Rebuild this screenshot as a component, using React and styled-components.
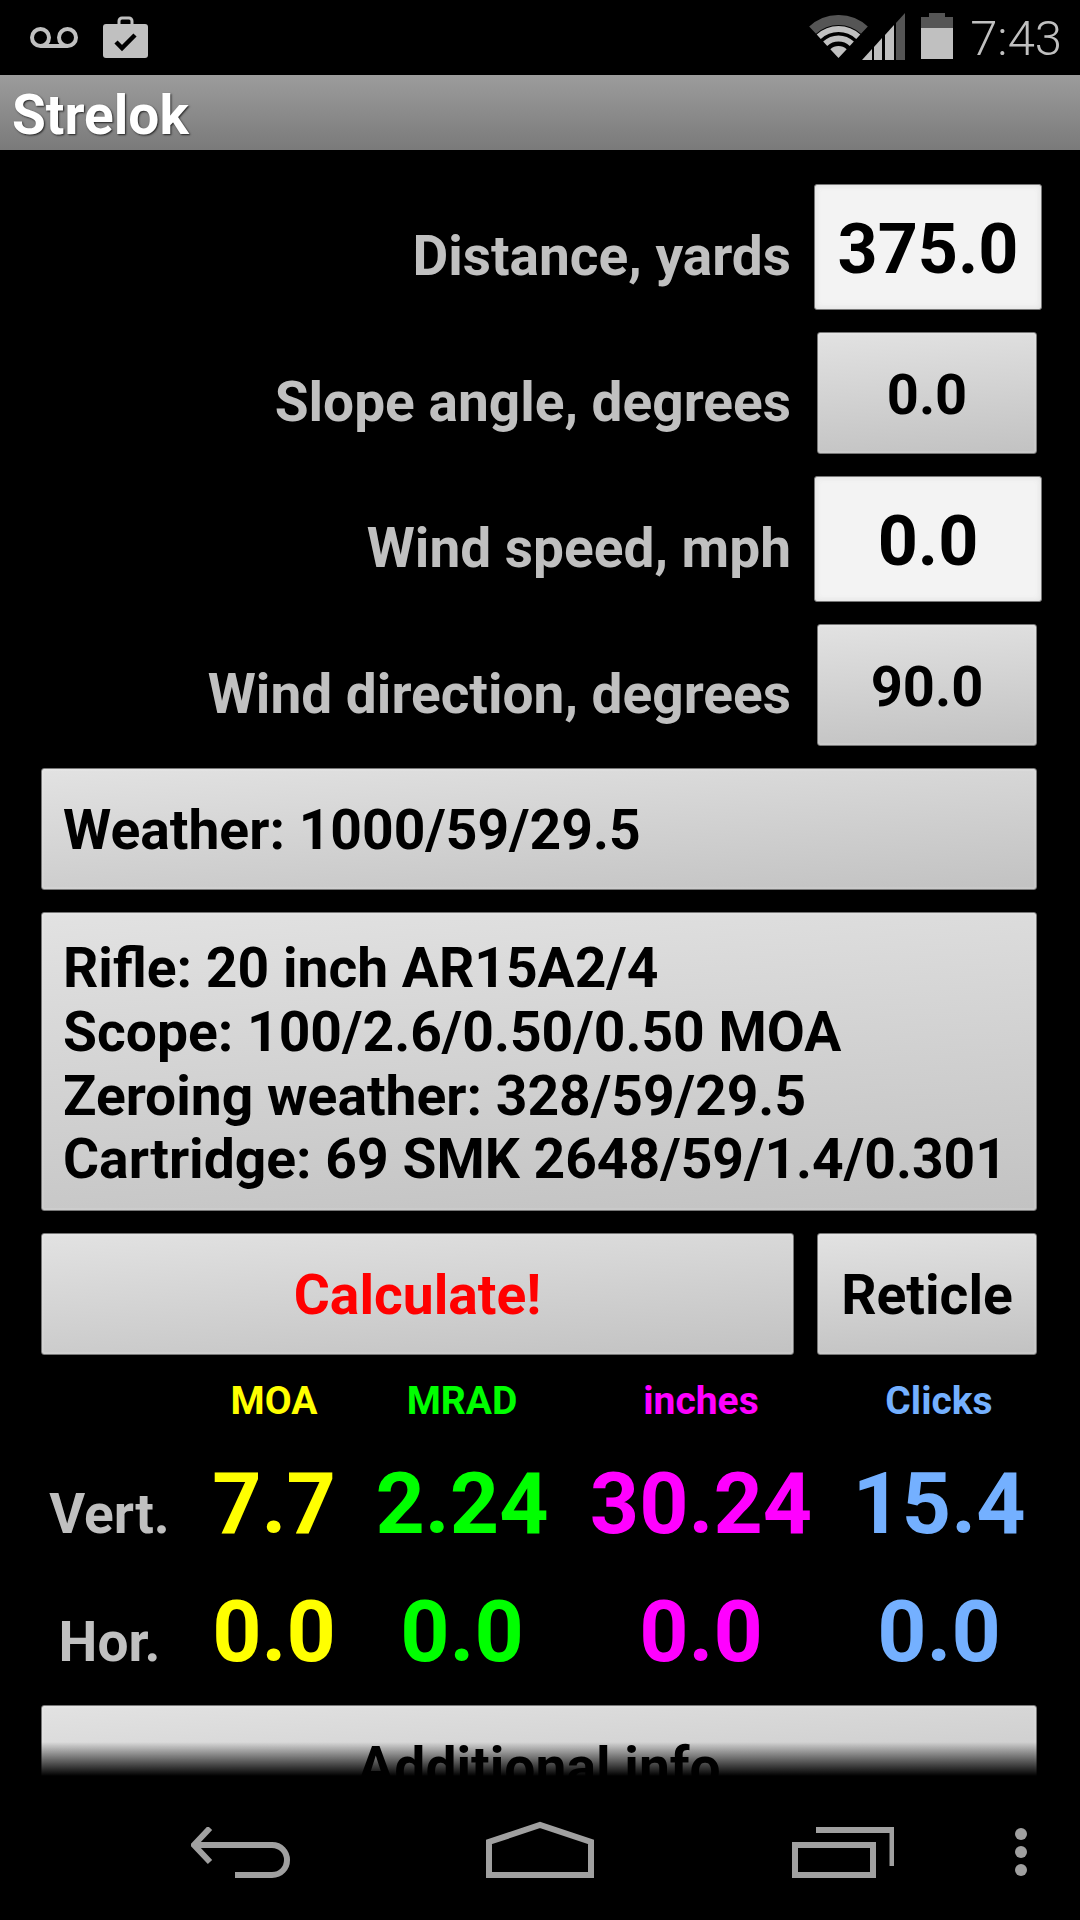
import React from "react";
import styled, { createGlobalStyle } from "styled-components";

const rows = [
  { label: "Distance, yards", value: "375.0", focused: true },
  { label: "Slope angle, degrees", value: "0.0" },
  { label: "Wind speed, mph", value: "0.0", focused: true },
  { label: "Wind direction, degrees", value: "90.0" },
];

const infoLines = [
  "Rifle: 20 inch AR15A2/4",
  "Scope: 100/2.6/0.50/0.50 MOA",
  "Zeroing weather: 328/59/29.5",
  "Cartridge: 69 SMK 2648/59/1.4/0.301",
];

const YELLOW = "#ffff00";
const GREEN = "#00ff00";
const MAGENTA = "#ff00ff";
const BLUE = "#74b0ff";

// wifi fan: stroked arcs around the apex of the icon
const wifiArc = (r) => {
  const a = (43 * Math.PI) / 180;
  const dx = (r * Math.sin(a)).toFixed(2);
  const y = (43 - r * Math.cos(a)).toFixed(2);
  return `M${29.5 - dx} ${y}A${r} ${r} 0 0 1 ${29.5 + Number(dx)} ${y}`;
};

function App() {
  return (
    <>
      <GlobalStyle />
      <Screen>
        <StatusBar>
          <StatusGroup>
            <VoicemailSvg width="48" height="21" viewBox="0 0 48 21" fill="none" stroke="#c0c0c0" strokeWidth="4">
              <circle cx="10.5" cy="10.5" r="8.500" />
              <circle cx="37.5" cy="10.5" r="8.500" />
              <path d="M10.5 19h27" />
            </VoicemailSvg>
            <BriefcaseIcon />
          </StatusGroup>
          <StatusGroup>
            <WifiIcon />
            <SignalIcon />
            <BatteryIcon />
            <Clock>7:43</Clock>
          </StatusGroup>
        </StatusBar>
        <ActionBar>Strelok</ActionBar>

        <Content>
          {rows.map((row) => (
            <InputRow key={row.label}>
              <RowLabel $focused={row.focused}>{row.label}</RowLabel>
              <ValueButton $focused={row.focused}>{row.value}</ValueButton>
            </InputRow>
          ))}

          <WideButton>Weather: 1000/59/29.5</WideButton>
          <InfoButton>
            {infoLines.map((line) => (
              <div key={line}>{line}</div>
            ))}
          </InfoButton>

          <ActionRow>
            <CalculateButton>Calculate!</CalculateButton>
            <ReticleButton>Reticle</ReticleButton>
          </ActionRow>

          <Results>
            <span />
            <Unit $color={YELLOW}>MOA</Unit>
            <Unit $color={GREEN}>MRAD</Unit>
            <Unit $color={MAGENTA}>inches</Unit>
            <Unit $color={BLUE}>Clicks</Unit>

            <AxisLabel>Vert.</AxisLabel>
            <Reading $color={YELLOW}>7.7</Reading>
            <Reading $color={GREEN}>2.24</Reading>
            <Reading $color={MAGENTA}>30.24</Reading>
            <Reading $color={BLUE}>15.4</Reading>

            <AxisLabel>Hor.</AxisLabel>
            <Reading $color={YELLOW}>0.0</Reading>
            <Reading $color={GREEN}>0.0</Reading>
            <Reading $color={MAGENTA}>0.0</Reading>
            <Reading $color={BLUE}>0.0</Reading>
          </Results>

          <AdditionalButton>Additional info</AdditionalButton>
          <BottomFade />
        </Content>

        <NavBar>
          <BackIcon />
          <HomeIcon />
          <RecentsIcon />
          <MenuDots>
            <Dot />
            <Dot />
            <Dot />
          </MenuDots>
        </NavBar>
      </Screen>
    </>
  );
}

function BriefcaseIcon() {
  return (
    <BriefcaseSvg width="45" height="42" viewBox="0 0 45 42">
      <path d="M16 9V5a3 3 0 0 1 3-3h7a3 3 0 0 1 3 3v4" fill="none" stroke="#c0c0c0" strokeWidth="3" />
      <rect y="8" width="45" height="34" rx="3" fill="#c0c0c0" />
      <path d="M13 26l6 6 13-13" fill="none" stroke="#000" strokeWidth="4.500" />
    </BriefcaseSvg>
  );
}

function WifiIcon() {
  return (
    <WifiSvg width="59" height="43" viewBox="0 0 59 43" fill="none">
      <path d={wifiArc(38)} stroke="#555" strokeWidth="10" />
      <path d={wifiArc(29)} stroke="#c0c0c0" strokeWidth="6" />
      <path d={wifiArc(19.5)} stroke="#c0c0c0" strokeWidth="6" />
      <path d={wifiArc(6)} stroke="#c0c0c0" strokeWidth="12" />
    </WifiSvg>
  );
}

function SignalIcon() {
  return (
    <SignalSvg width="43" height="47" viewBox="0 0 43 47">
      <polygon points="0,47 10,36 10,47" fill="#c0c0c0" />
      <polygon points="12,47 12,34 20,25 20,47" fill="#c0c0c0" />
      <polygon points="23,47 23,22 32,12 32,47" fill="#c0c0c0" />
      <polygon points="34,47 34,10 43,0 43,47" fill="#555" />
    </SignalSvg>
  );
}

function BatteryIcon() {
  return (
    <BatterySvg width="32" height="46" viewBox="0 0 32 46">
      <path d="M8 0h16v4h8v11H0V4h8z" fill="#555" />
      <rect y="15" width="32" height="31" fill="#c0c0c0" />
    </BatterySvg>
  );
}

function BackIcon() {
  return (
    <NavSvg $left={191} width="99" height="51" viewBox="0 0 99 51" fill="none" stroke="#a0a0a0" strokeWidth="6">
      <path d="M19 1L3 18l16 17" />
      <path d="M3 18h78c9 0 15 7 15 15s-6 15-15 15H44" />
    </NavSvg>
  );
}

function HomeIcon() {
  return (
    <NavSvg $left={486} width="108" height="57" viewBox="0 0 108 57" fill="none" stroke="#a0a0a0" strokeWidth="6">
      <path d="M3 54V21L54 4l51 17v33z" />
    </NavSvg>
  );
}

function RecentsIcon() {
  return (
    <NavSvg $left={792} width="102" height="51" viewBox="0 0 102 51" fill="none" stroke="#a0a0a0" strokeWidth="6">
      <rect x="3" y="18" width="78" height="30" />
      <path d="M24 3h76.500v36" />
    </NavSvg>
  );
}

const GlobalStyle = createGlobalStyle`
  html, body {
    margin: 0;
    padding: 0;
    background: #000;
  }
`;

const Screen = styled.div`
  width: 1080px;
  height: 1920px;
  display: flex;
  flex-direction: column;
  overflow: hidden;
  background: #000;
  font-family: Roboto, "Liberation Sans", sans-serif;
`;

const StatusBar = styled.div`
  height: 75px;
  flex-shrink: 0;
  display: flex;
  justify-content: space-between;
  padding: 0 18px 0 30px;
`;

const StatusGroup = styled.div`
  display: flex;
  align-items: flex-start;
`;

const VoicemailSvg = styled.svg`
  margin-top: 27px;
`;

const BriefcaseSvg = styled.svg`
  margin: 16px 0 0 25px;
`;

const WifiSvg = styled.svg`
  margin-top: 15px;
`;

const SignalSvg = styled.svg`
  margin: 13px 0 0 -6px;
`;

const BatterySvg = styled.svg`
  margin: 13px 0 0 16px;
`;

const Clock = styled.div`
  margin: 14px 0 0 17px;
  font-size: 49px;
  line-height: 50px;
  font-weight: 300;
  color: #c0c0c0;
`;

const ActionBar = styled.div`
  height: 75px;
  flex-shrink: 0;
  box-sizing: border-box;
  padding: 6px 0 0 12px;
  background: linear-gradient(#9c9c9c, #7a7a7a);
  color: #fff;
  font-size: 55px;
  font-weight: 700;
  line-height: 69px;
  text-shadow: 1px 1px 2px #222;
`;

const Content = styled.div`
  position: relative;
  flex: 1;
  min-height: 0;
  overflow: hidden;
  display: flex;
  flex-direction: column;
  gap: 22px;
  padding: 34px 43px 0 41px;
`;

const InputRow = styled.div`
  display: flex;
  justify-content: flex-end;
  align-items: center;
`;

const RowLabel = styled.div`
  margin-right: ${(p) => (p.$focused ? 23 : 26)}px;
  padding-top: 18px;
  font-size: 55px;
  font-weight: 700;
  color: #c0c0c0;
`;

const Button = styled.button`
  display: block;
  box-sizing: border-box;
  padding: 2px 0 0;
  border: 1px solid #777;
  border-radius: 3px;
  background: linear-gradient(176deg, #e2e2e2, #c2c2c2);
  box-shadow: inset 0 0 0 2px rgba(255, 255, 255, 0.1);
  color: #000;
  font-family: inherit;
  font-size: 55.2px;
  font-weight: 700;
  flex-shrink: 0;
`;

const ValueButton = styled(Button)`
  width: ${(p) => (p.$focused ? 228 : 220)}px;
  height: ${(p) => (p.$focused ? 126 : 122)}px;
  margin-right: ${(p) => (p.$focused ? -5 : 0)}px;
  padding-top: 4px;
  font-size: ${(p) => (p.$focused ? 70 : 56)}px;
  background: ${(p) =>
    p.$focused ? "#f3f3f3" : "linear-gradient(176deg, #e2e2e2, #c2c2c2)"};
  box-shadow: ${(p) =>
    p.$focused ? "inset 0 0 6px #dcdcdc" : "inset 0 0 0 2px rgba(255, 255, 255, 0.1)"};
`;

const WideButton = styled(Button)`
  height: 122px;
  padding-left: 21px;
  text-align: left;
`;

const InfoButton = styled(Button)`
  height: 299px;
  padding: 6px 0 0 21px;
  text-align: left;
  line-height: 63.8px;
  white-space: nowrap;
`;

const ActionRow = styled.div`
  display: flex;
  justify-content: space-between;
`;

const CalculateButton = styled(Button)`
  width: 753px;
  height: 122px;
  color: #ff0000;
`;

const ReticleButton = styled(Button)`
  width: 220px;
  height: 122px;
`;

const Results = styled.div`
  display: grid;
  grid-template-columns: 137px 192px 184px 294px 182px;
  grid-template-rows: 75px 128px 101px;
  align-items: baseline;
  justify-items: center;
  margin-top: 2px;
`;

const Unit = styled.div`
  font-size: 39px;
  line-height: 44px;
  font-weight: 700;
  color: ${(p) => p.$color};
`;

const Reading = styled.div`
  font-size: 86px;
  line-height: 100px;
  font-weight: 700;
  color: ${(p) => p.$color};
`;

const AxisLabel = styled.div`
  font-size: 55px;
  font-weight: 700;
  color: #c0c0c0;
`;

const AdditionalButton = styled(Button)`
  height: 122px;
`;

const BottomFade = styled.div`
  position: absolute;
  left: 0;
  right: 0;
  bottom: 0;
  height: 34px;
  background: linear-gradient(rgba(0, 0, 0, 0), #000);
`;

const NavBar = styled.div`
  position: relative;
  height: 144px;
  flex-shrink: 0;
`;

const NavSvg = styled.svg`
  position: absolute;
  left: ${(p) => p.$left}px;
  bottom: 42px;
`;

const MenuDots = styled.div`
  position: absolute;
  left: 1015px;
  top: 52px;
  display: flex;
  flex-direction: column;
  gap: 6px;
`;

const Dot = styled.div`
  width: 12px;
  height: 12px;
  border-radius: 50%;
  background: #a0a0a0;
`;

export default App;
